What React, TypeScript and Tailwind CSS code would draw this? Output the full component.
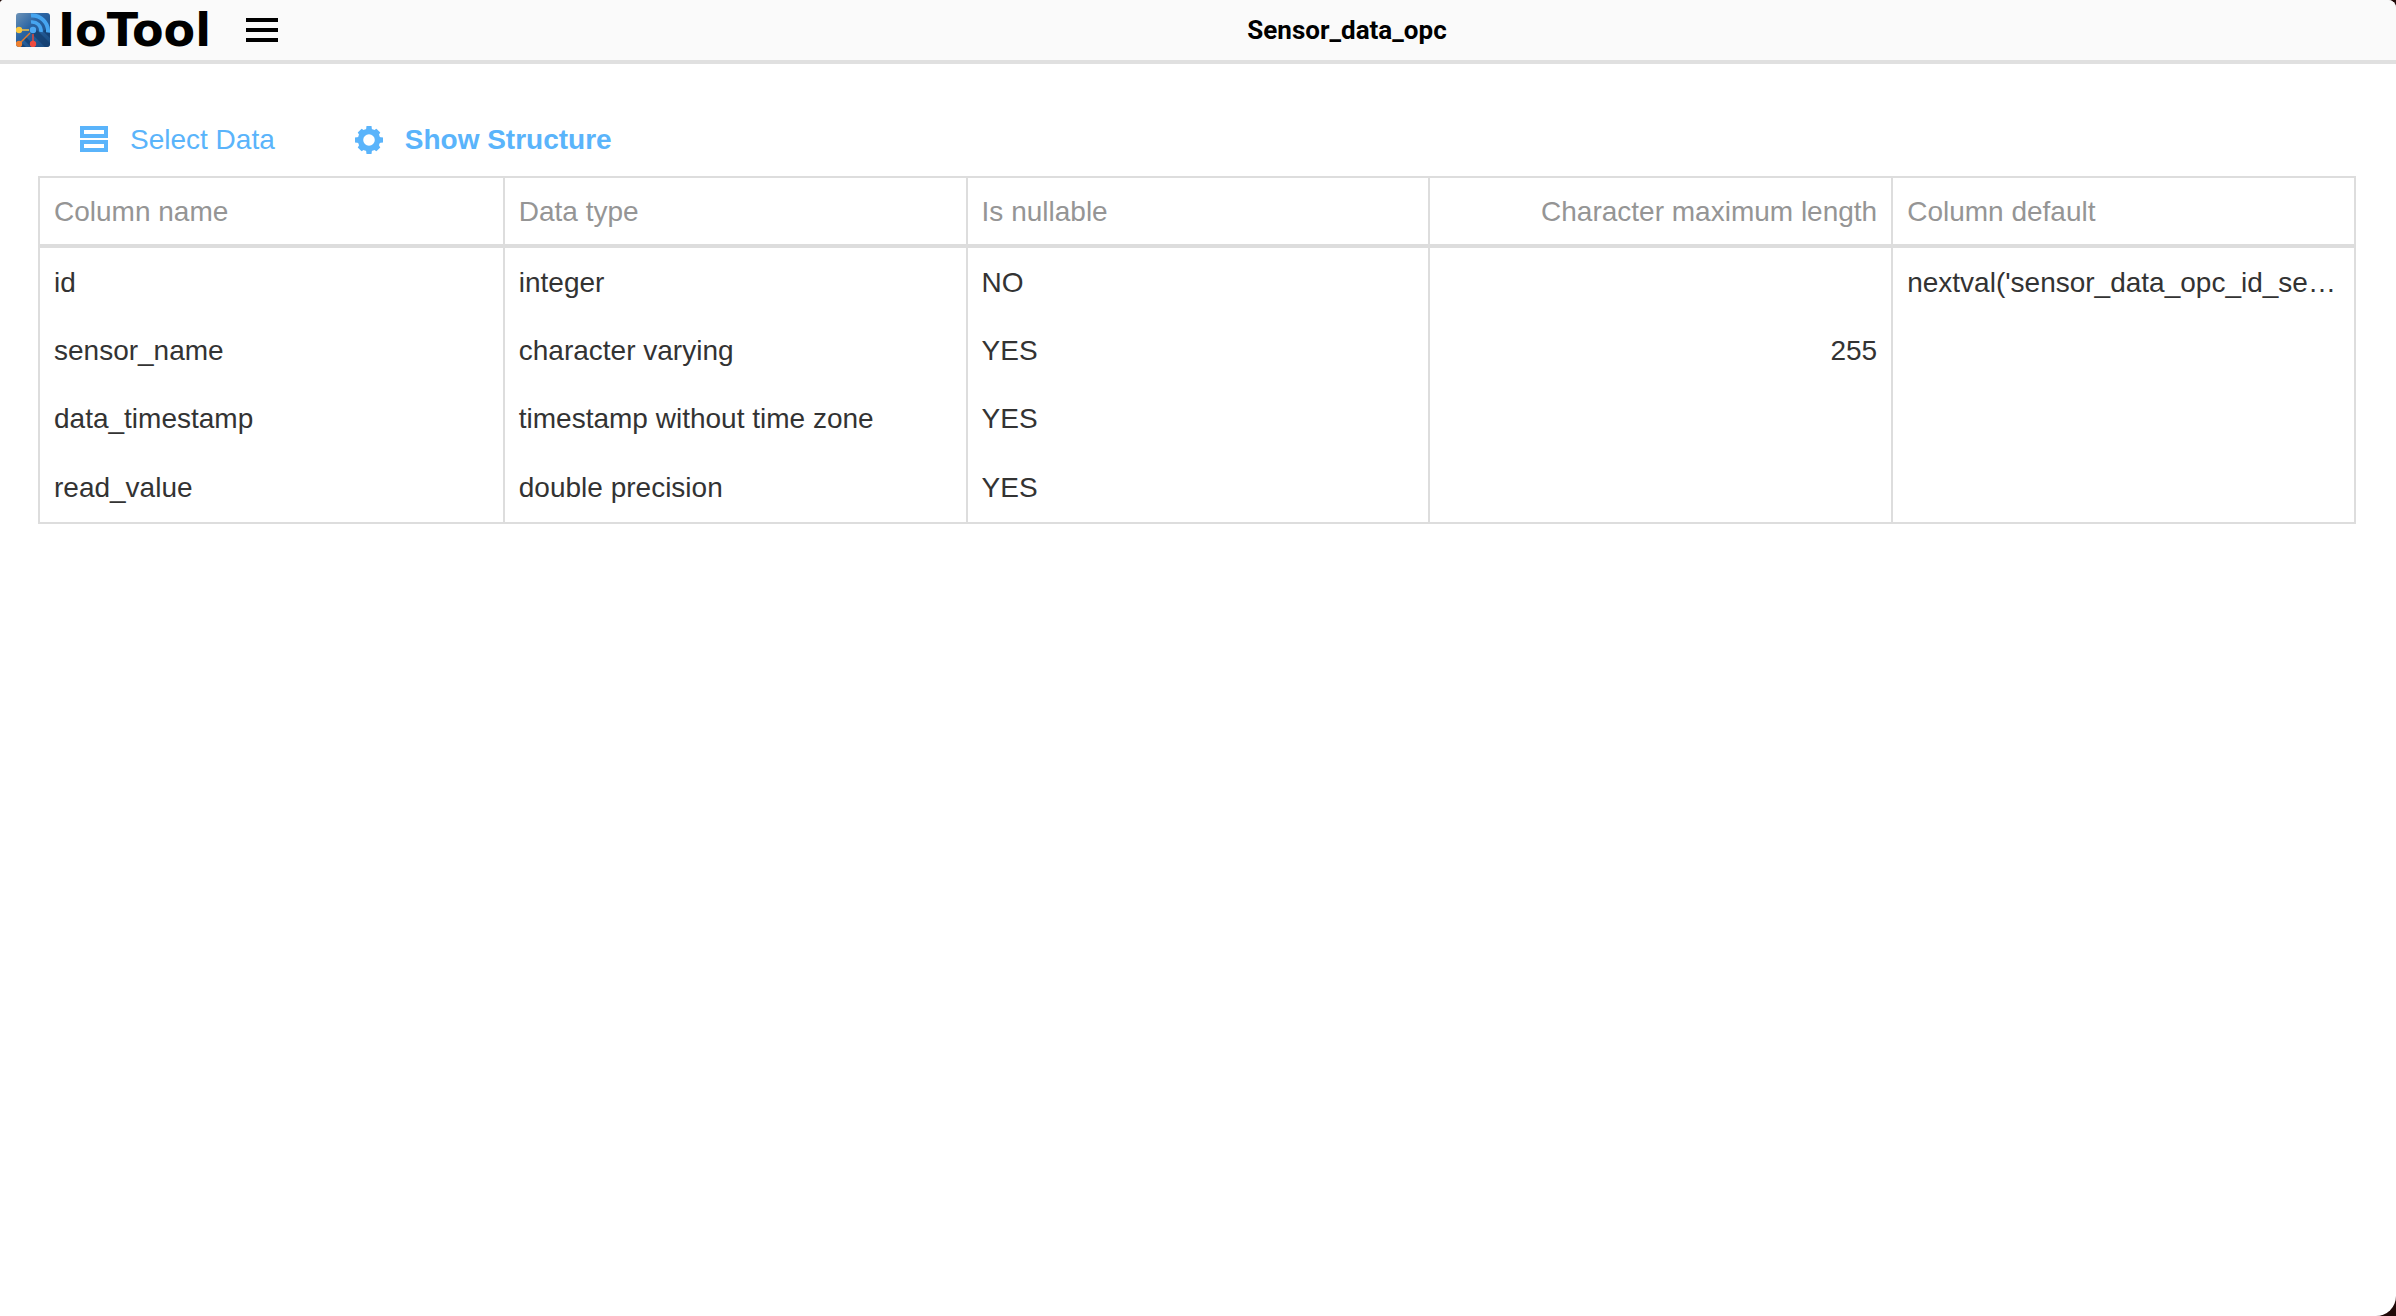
import React, { useState } from 'react';

interface Column {
  key: string;
  label: string;
  numeric?: boolean;
}

const columns: Column[] = [
  { key: 'name', label: 'Column name' },
  { key: 'type', label: 'Data type' },
  { key: 'nullable', label: 'Is nullable' },
  { key: 'length', label: 'Character maximum length', numeric: true },
  { key: 'default', label: 'Column default' },
];

const rows: Record<string, string>[] = [
  { name: 'id', type: 'integer', nullable: 'NO', length: '', default: "nextval('sensor_data_opc_id_seq'::regclass)" },
  { name: 'sensor_name', type: 'character varying', nullable: 'YES', length: '255', default: '' },
  { name: 'data_timestamp', type: 'timestamp without time zone', nullable: 'YES', length: '', default: '' },
  { name: 'read_value', type: 'double precision', nullable: 'YES', length: '', default: '' },
];

const LogoMark: React.FC = () => (
  <svg viewBox="0 0 34 34" className="w-[34px] h-[34px]" aria-hidden="true">
    <defs>
      <linearGradient id="mark" x1="0" y1="0" x2="1" y2="1">
        <stop offset="0" stopColor="#6d93b8" />
        <stop offset="0.4" stopColor="#2a64a3" />
        <stop offset="1" stopColor="#174a80" />
      </linearGradient>
      <clipPath id="mark-clip">
        <rect width="34" height="34" rx="3" />
      </clipPath>
    </defs>
    <g clipPath="url(#mark-clip)">
      <rect width="34" height="34" fill="url(#mark)" />
      <path d="M19 15l15 15v4h-5L15 20zM5 29l5 5H5zM10 24l10 10h-5l-8-8zM31 16l3 3v6L27 18z" fill="#123c6c" opacity="0.7" />
      <g fill="none" stroke="#46a5f0">
        <path d="M15 9a9 9 0 0 1 10 10" strokeWidth="3.5" />
        <path d="M15 2.5a16 16 0 0 1 17 17" strokeWidth="4" />
      </g>
      <path d="M3 17h10" stroke="#f5c244" strokeWidth="1.5" />
      <path d="M3 31L14 20" stroke="#e07b2e" strokeWidth="1.5" />
      <path d="M17 31V21" stroke="#e2483c" strokeWidth="1.5" />
      <circle cx="3" cy="17" r="3.2" fill="#fcc93f" />
      <circle cx="3" cy="31" r="3.2" fill="#ee8130" />
      <circle cx="17" cy="31" r="3.2" fill="#ee4b40" />
      <circle cx="17" cy="17" r="3.2" fill="#4fa9f2" />
    </g>
  </svg>
);

const RowsIcon: React.FC = () => (
  <svg viewBox="0 0 28 28" className="w-7 h-7 shrink-0" fill="none" stroke="currentColor" strokeWidth="4" aria-hidden="true">
    <path d="M2 2h24v8H2zM2 16h24v8H2z" />
  </svg>
);

const GearIcon: React.FC = () => (
  <svg viewBox="0 0 28 28" className="w-7 h-7 shrink-0" fill="currentColor" aria-hidden="true">
    <circle cx="14" cy="14" r="8.5" fill="none" stroke="currentColor" strokeWidth="5.4" />
    {[0, 90, 180, 270].map((angle) => (
      <g key={angle} transform={`rotate(${angle} 14 14)`}>
        <path d="M11 4l.5-4h5l.5 4z" />
        <path d="M10.500 4l.8-3.200h5.400l.8 3.200z" transform="rotate(45 14 14)" />
      </g>
    ))}
  </svg>
);

const App: React.FC = () => {
  const [tab, setTab] = useState('structure');

  return (
    <div className="min-h-screen bg-[#200a08]">
      <div className="min-h-screen bg-white rounded-tl-[4px] rounded-tr-[8px] rounded-br-[20px] overflow-hidden font-['Liberation_Sans',Arial,sans-serif] text-[28px] leading-8">
        <header className="flex items-center h-16 pl-4 bg-[#fafafa] border-b-4 border-[#e0e0e0]">
          <a href="#" className="flex items-center gap-2 w-[230px] text-black">
            <LogoMark />
            <span className="font-['DejaVu_Sans',sans-serif] font-bold text-[46px] leading-none">IoTool</span>
          </a>
          <button type="button" aria-label="Menu" className="flex flex-col gap-[6px] w-8 mr-5">
            <span className="h-1 w-full bg-black" />
            <span className="h-1 w-full bg-black" />
            <span className="h-1 w-full bg-black" />
          </button>
          <h1 className="flex-1 text-center font-['Roboto',sans-serif] font-bold text-[26px] text-black">Sensor_data_opc</h1>
        </header>

        <main className="pt-12 pl-[38px] pr-10">
          <nav className="flex items-center gap-20 h-16 px-[42px] pb-2 text-[#5ab4fb]">
            <button
              type="button"
              onClick={() => setTab('data')}
              className={`flex items-center gap-[22px] ${tab === 'data' ? 'font-bold' : ''}`}
            >
              <RowsIcon />
              Select Data
            </button>
            <button
              type="button"
              onClick={() => setTab('structure')}
              className={`flex items-center gap-[22px] ${tab === 'structure' ? 'font-bold' : ''}`}
            >
              <GearIcon />
              Show Structure
            </button>
          </nav>

          <table className="w-full table-fixed border-separate border-spacing-0 border-2 border-[#dddddd]">
            <thead>
              <tr className="h-[70px] text-[#959595]">
                {columns.map((col) => (
                  <th
                    key={col.key}
                    scope="col"
                    className={`px-[14px] pt-[2px] font-normal border-b-4 border-l-2 first:border-l-0 border-[#dddddd] ${col.numeric ? 'text-right' : 'text-left'}`}
                  >
                    {col.label}
                  </th>
                ))}
              </tr>
            </thead>
            <tbody>
              {rows.map((row) => (
                <tr key={row.name} className="h-[68px] last:h-[70px] text-[#333333]">
                  {columns.map((col) => (
                    <td
                      key={col.key}
                      className={`px-[14px] pt-[2px] truncate border-l-2 first:border-l-0 border-[#dddddd] ${col.numeric ? 'text-right' : 'text-left'}`}
                    >
                      {row[col.key]}
                    </td>
                  ))}
                </tr>
              ))}
            </tbody>
          </table>
        </main>
      </div>
    </div>
  );
};

export default App;
